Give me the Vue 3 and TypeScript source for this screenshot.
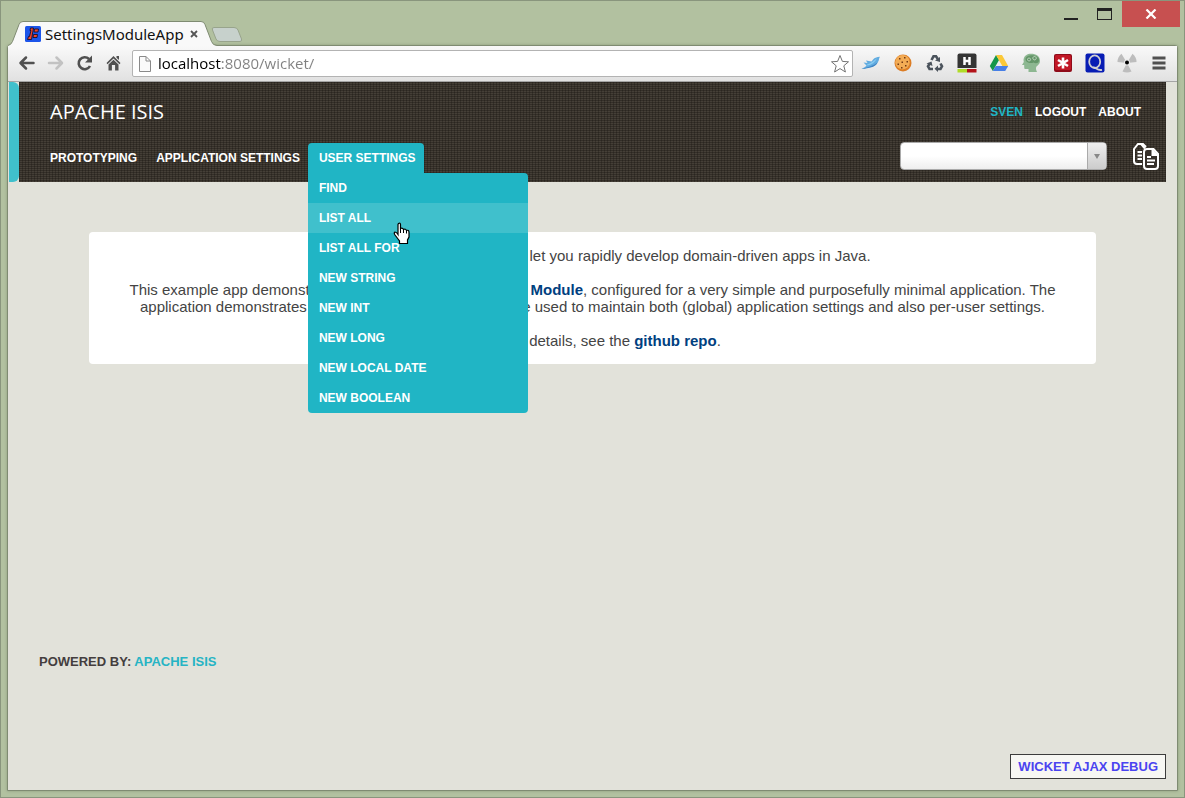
<script setup lang="ts">
import { ref } from 'vue'

interface MenuItem { label: string; active?: boolean }

const address = ref('localhost:8080/wicket/')
const search = ref('')

const userSettings: MenuItem[] = [
  { label: 'Find' },
  { label: 'List All', active: true },
  { label: 'List All For' },
  { label: 'New String' },
  { label: 'New Int' },
  { label: 'New Long' },
  { label: 'New Local Date' },
  { label: 'New Boolean' },
]
</script>

<template>
  <div class="window">
    <div class="titlebar">
      <div class="tab">
        <svg class="tab-shape" width="210" height="25" viewBox="0 0 210 25" aria-hidden="true">
          <path d="M0 25 V24.5 Q3 24 4.500 20.500 L11 3.500 Q12 .5 15 .5 H193 Q196 .5 197 3.500 L203.500 20.500 Q205 24.500 209 24.500 V25 Z" fill="#f9f9f9" />
          <path d="M0 24.500 Q3 24 4.500 20.500 L11 3.500 Q12 .5 15 .5 H193 Q196 .5 197 3.500 L203.500 20.500 Q205 24.500 209 24.500" fill="none" stroke="#7f8b72" />
        </svg>
        <div class="tab-content">
          <svg width="16" height="16" viewBox="0 0 16 16" aria-hidden="true">
            <rect width="16" height="16" rx="1.500" fill="#1d55ea" />
            <path d="M5.500 2 H8.500 L6.500 13.500 H2.500 L3.500 10.500 H4.500 L6 4.500 H5 Z M9.500 3 H13.500 L13 6 H9 Z M8.500 8.500 H12.500 L12 11.500 H8 Z" fill="#f4442a" stroke="#14102c" stroke-width=".9" />
          </svg>
          <span class="tab-title">SettingsModuleApp</span>
          <button class="tab-close" aria-label="Close tab">
            <svg width="8" height="8" viewBox="0 0 8 8"><path d="M1 1 L7 7 M7 1 L1 7" stroke="#555" stroke-width="1.800" /></svg>
          </button>
        </div>
      </div>
      <button class="new-tab" aria-label="New tab">
        <svg width="34" height="18" viewBox="0 0 34 18">
          <path d="M4 1.500 H24 Q27 1.500 28 4 L31.500 13 Q32 15.500 30 15.500 H10 Q7 15.500 6 13 L2.500 4 Q1.500 1.500 4 1.500 Z" fill="#c7d1cc" stroke="#98a48c" />
        </svg>
      </button>
      <div class="controls">
        <button class="control" aria-label="Minimize">
          <svg width="16" height="14" viewBox="0 0 16 14"><rect x="1" y="11" width="14" height="2" fill="#222" /></svg>
        </button>
        <button class="control" aria-label="Maximize">
          <svg width="16" height="14" viewBox="0 0 16 14"><path d="M0 1 H15 V13 H0 Z M1 4 V12 H14 V4 Z" fill="#222" fill-rule="evenodd" /></svg>
        </button>
        <button class="control close" aria-label="Close">
          <svg width="12" height="10" viewBox="0 0 12 10"><path d="M1.500 .5 L10.500 9.500 M10.500 .5 L1.500 9.500" stroke="#fff" stroke-width="2.200" /></svg>
        </button>
      </div>
    </div>

    <div class="client">
      <div class="toolbar">
        <div class="nav-buttons">
          <button aria-label="Back">
            <svg width="18" height="18" viewBox="0 0 18 18"><path d="M15.500 9 H3 M8 3.500 L2.500 9 L8 14.500" fill="none" stroke="#505050" stroke-width="2.500" stroke-linecap="round" stroke-linejoin="round" /></svg>
          </button>
          <button aria-label="Forward">
            <svg width="18" height="18" viewBox="0 0 18 18"><path d="M2 9 H14.500 M9.500 3.500 L15 9 L9.500 14.500" fill="none" stroke="#c2c2c2" stroke-width="2.500" stroke-linecap="round" stroke-linejoin="round" /></svg>
          </button>
          <button aria-label="Reload">
            <svg width="18" height="18" viewBox="0 0 18 18"><path d="M14 12 A6 6 0 1 1 13 5" fill="none" stroke="#505050" stroke-width="2.600" /><path d="M16 1.500 V8.500 H9 Z" fill="#505050" /></svg>
          </button>
          <button aria-label="Home">
            <svg width="18" height="18" viewBox="0 0 18 18"><path d="M8.500 2 L15.500 9 L14.500 10.200 L8.500 4.500 L2.500 10.200 L1.500 9 Z M11.500 2 H14 V6 L11.500 3.800 Z M8.500 5.800 L13.500 10.500 V16.500 H10.100 V11 H6.900 V16.500 H3.500 V10.500 Z" fill="#505050" /></svg>
          </button>
        </div>
        <div class="address">
          <svg width="14" height="18" viewBox="0 0 14 18" aria-hidden="true"><path d="M1.500 1.500 H8 L12.500 6 V16.500 H1.500 Z M8 1.500 V6 H12.500" fill="#fafafa" stroke="#8a8a8a" /></svg>
          <input v-model="address" type="text" aria-label="Address" spellcheck="false" />
          <button class="star" aria-label="Bookmark this page">
            <svg width="20" height="20" viewBox="0 0 20 20"><path d="M10 1.500 L12.400 7.400 L18.500 7.800 L13.800 11.800 L15.400 18 L10 14.600 L4.600 18 L6.200 11.800 L1.500 7.800 L7.600 7.400 Z" fill="#fff" stroke="#737373" stroke-linejoin="round" /></svg>
          </button>
        </div>
        <div class="extensions">
          <button aria-label="Twitter">
            <svg width="20" height="20" viewBox="0 0 20 20"><path d="M.5 15.800 C3 14.800 4.500 14 5.500 12.500 L2.500 9.500 L6.500 10 L5 7.500 L10.500 8.500 C12.500 6.500 12.500 4.500 19 3.800 C17.500 5.500 18.500 7 17 9 C15.500 12 12.500 14 9 14.500 C6 15 4 16 .5 15.800 Z" fill="#62ace0" /><path d="M6 11.500 C10 10.500 12.500 8 16 5.200 C14 9.500 10.500 11.800 6.500 12.500 Z" fill="#8accf2" /><path d="M.5 15.800 C6 14.500 12 13 16.800 9.200 C15.500 12 12.500 14 9 14.500 C6 15 4 16 .5 15.800 Z" fill="#4386c4" /></svg>
          </button>
          <button aria-label="Cookies">
            <svg width="18" height="18" viewBox="0 0 18 18"><circle cx="9" cy="9" r="8.500" fill="#dc7d25" /><circle cx="8.500" cy="8.200" r="7.200" fill="#f3ac55" /><path d="M5 4 h1.500 v1.500 H5 Z M10 3 h1.500 v1.500 H10 Z M7.500 7.500 h1.500 V9 H7.500 Z M12.500 7 H14 v1.500 h-1.500 Z M3.500 9.500 H5 V11 H3.500 Z M11 11 h1.500 v1.500 H11 Z M7 13 h1.500 v1.500 H7 Z" fill="#733a14" /></svg>
          </button>
          <button aria-label="Recycle">
            <svg width="18" height="18" viewBox="0 0 18 18" fill="none" stroke="#4b535c" stroke-width="2.600"><path d="M5.500 6 L7.500 2.300 H10 L11.800 5" /><path d="M14.500 9.500 L16 12.300 L14.500 15 H11" /><path d="M7 15 H3.500 L2 12.300 L3.800 9.500" /><path d="M9 6.500 L14 3 V8 Z M12 11.500 V18 L8.500 14.800 Z M.5 9.500 L5.500 7.500 L6.500 12 Z" fill="#4b535c" stroke="none" /></svg>
          </button>
          <button aria-label="Highlighter">
            <svg width="20" height="20" viewBox="0 0 20 20"><path d="M2.500 .5 H17.500 Q19.500 .5 19.500 2.500 V15 H.5 V2.500 Q.5 .5 2.500 .5 Z" fill="#343434" /><path d="M7.500 4 V12 M12.500 4 V12 M7.500 8 H12.500" stroke="#fff" stroke-width="2.500" /><rect x=".5" y="16" width="9.500" height="3.500" fill="#b0dc28" /><rect x="10" y="16" width="9.500" height="3.500" fill="#b31319" /></svg>
          </button>
          <button aria-label="Drive">
            <svg width="20" height="18" viewBox="0 0 20 18"><path d="M7 1 L.8 12 L3.800 17 L10 6 Z" fill="#14974b" /><path d="M7 1 H13 L19.200 12 H13.300 Z" fill="#fbc838" /><path d="M6.800 12 H19.200 L16.200 17 H3.800 Z" fill="#477fe6" /></svg>
          </button>
          <button aria-label="Brain">
            <svg width="20" height="20" viewBox="0 0 20 20"><path d="M2.500 7 C3 2.500 6.500 .8 10 .8 C15 .8 19 3 19 8 C19 11 17 12 15.500 13.500 C14.500 15 15 17 16 19 H7.500 V16 H4 Q3 16 3.200 13.500 V12 H1 L2.800 9 Z" fill="#8db791" /><path d="M4.500 6 C4.500 1 17.500 .5 18 6.500 C18.500 10.500 14.500 11 12.500 9.500 C9.500 11 4.500 9.500 4.500 6 Z" fill="#649669" /><path d="M8 5 a1.500 1.500 0 1 0 .1 0 M13.500 3.500 a1.700 1.700 0 1 0 .1 0" fill="none" stroke="#c3d8c3" /></svg>
          </button>
          <button aria-label="Password manager">
            <svg width="18" height="18" viewBox="0 0 18 18"><rect width="18" height="18" rx="2" fill="#8f0b19" /><rect x="1" y="1" width="16" height="15" rx="1.500" fill="#c11726" /><path d="M9 3.500 V14.500 M4 6 L14 12 M14 6 L4 12" stroke="#fff" stroke-width="2.600" /></svg>
          </button>
          <button aria-label="Quick search">
            <svg width="20" height="20" viewBox="0 0 20 20"><rect x=".5" y=".5" width="19" height="19" rx="2" fill="#071cb4" /><ellipse cx="9.700" cy="8.700" rx="5.500" ry="6.300" fill="none" stroke="#cfcfd2" stroke-width="1.800" /><path d="M8 14.500 C11 14 12 18 17 16.800" fill="none" stroke="#cfcfd2" stroke-width="1.800" /></svg>
          </button>
          <button aria-label="Radiation">
            <svg width="20" height="20" viewBox="0 0 20 20"><path d="M10 10 L.5 9 Q.5 4 4.500 .8 Z M10 10 L19.500 9 Q19.500 4 15.500 .8 Z M10 10 L5.500 18.500 Q10 20.500 14.500 18.500 Z" fill="#bdbdbd" /><circle cx="10" cy="9.500" r="3" fill="#e9e9e9" /><circle cx="10" cy="9.500" r="2" fill="#000" /></svg>
          </button>
          <button aria-label="Menu">
            <svg width="14" height="14" viewBox="0 0 14 14"><path d="M.5 2 H13.500 M.5 7 H13.500 M.5 12 H13.500" stroke="#505050" stroke-width="2.800" /></svg>
          </button>
        </div>
      </div>

      <div class="page">
        <header class="header">
          <div class="accent"></div>
          <div class="banner">
            <div class="banner-row">
              <a class="brand" href="#">APACHE ISIS</a>
              <nav class="account" aria-label="Account">
                <a class="user" href="#">Sven</a>
                <a href="#">Logout</a>
                <a href="#">About</a>
              </nav>
            </div>
            <div class="banner-row menu-row">
              <nav class="menu" aria-label="Services">
                <a class="menu-title" href="#">Prototyping</a>
                <a class="menu-title" href="#">Application Settings</a>
                <div class="menu-group">
                  <a class="menu-title open" href="#">User Settings</a>
                  <ul class="dropdown">
                    <li v-for="item in userSettings" :key="item.label" :class="{ active: item.active }">
                      <a href="#">{{ item.label }}</a>
                      <svg v-if="item.active" class="pointer" width="18" height="23" viewBox="0 0 18 23" aria-hidden="true">
                        <path d="M5.500 1.500 Q7.500 .5 7.500 2.500 V6.500 Q9.500 5.500 10.500 7.500 Q12.500 6.500 13.500 8.500 Q16 7.500 16 10.500 V15 L14.500 18 V21.500 H6.500 V19 L2 13 Q.5 10.500 2 10 Q3.500 10 5 12.500 V2.500 Z" fill="#fff" stroke="#000" stroke-width="1.200" />
                        <path d="M7.500 6.500 V11 M10.500 7.500 V11 M13.500 8.500 V11.500" stroke="#000" />
                      </svg>
                    </li>
                  </ul>
                </div>
              </nav>
              <div class="tools">
                <div class="picker">
                  <select v-model="search" aria-label="Bookmarked pages"><option value=""></option></select>
                  <span class="picker-arrow"><svg width="6" height="5" viewBox="0 0 6 5"><path d="M0 0 H6 L3 5 Z" fill="#888" /></svg></span>
                </div>
                <button class="copy" aria-label="Copy link">
                  <svg width="28" height="28" viewBox="0 0 28 28" fill="none" stroke="#fff" stroke-width="2"><path d="M10 22 H5 Q2 22 2 19 V7 L6 2 H11 L14 5" /><path d="M9.500 2.500 L13 6.500" /><path d="M5.500 10 H10 M5.500 13.500 H10 M5.500 17 H10" /><path d="M15 7 H21.500 L26 12 V24 Q26 27 23 27 H15 Q12 27 12 24 V10 Q12 7 15 7 Z" fill="#37312b" /><path d="M20.500 7 V13 H26" fill="#fff" /><path d="M15 15 H19 M15 18.500 H23 M15 22 H22" /></svg>
                </button>
              </div>
            </div>
          </div>
        </header>

        <main class="welcome">
          <p>Apache Isis&trade; is a framework to let you rapidly develop domain-driven apps in Java.</p>
          <p>This example app demonstrates capabilities of the <a href="#">Settings Module</a>, configured for a very simple and purposefully minimal application. The application demonstrates how this module's entities can be used to maintain both (global) application settings and also per-user settings.</p>
          <p>For more details, see the <a href="#">github repo</a>.</p>
        </main>

        <footer class="footer">
          <span>POWERED BY: <a href="#">APACHE ISIS</a></span>
          <button class="debug">WICKET AJAX DEBUG</button>
        </footer>
      </div>
    </div>
  </div>
</template>

<style>
body { margin: 0; }
</style>

<style scoped>
* { box-sizing: border-box; }
button { border: 0; padding: 0; margin: 0; background: none; font: inherit; }
a { text-decoration: none; color: inherit; }
svg { display: block; flex: none; }

.window {
  min-height: 100vh;
  display: flex;
  flex-direction: column;
  padding: 0 6px 6px;
  border: 1px solid #89957d;
  background: #b2c1a0;
  font-family: "Liberation Sans", Arial, sans-serif;
}
.titlebar { display: flex; height: 44px; }
.tab { display: grid; align-self: flex-end; margin: 0 0 -1px 1px; z-index: 1; }
.tab-shape, .tab-content { grid-area: 1 / 1; }
.tab-content { display: flex; align-items: center; padding: 0 16px 0 17px; z-index: 1; }
.tab-title {
  flex: 1;
  min-width: 0;
  margin-left: 4px;
  font: 15px/20px "Noto Sans", "Open Sans", sans-serif;
  color: #111;
  white-space: nowrap;
}
.tab-close { width: 16px; height: 16px; display: grid; place-items: center; }
.new-tab { align-self: flex-end; margin-bottom: 1px; margin-left: -8px; }
.controls { display: flex; margin: 0 -2px 0 auto; }
.control { width: 34px; height: 26px; display: grid; place-items: center; }
.control.close { width: 58px; background: #c75050; }

.client {
  flex: 1;
  display: flex;
  flex-direction: column;
  border: 1px solid #7f8b72;
  border-radius: 3px 3px 0 0;
  box-shadow: 0 0 3px #8a987b;
  background: #e2e2da;
}
.toolbar {
  display: flex;
  align-items: center;
  height: 36px;
  padding: 0 2px 0 4px;
  background: linear-gradient(#f9f9f9, #e1e1e1);
  border-bottom: 1px solid #a5a5a5;
}
.nav-buttons { display: flex; margin-right: 4px; }
.nav-buttons button, .extensions button { height: 28px; padding-bottom: 2px; display: grid; place-items: center; }
.nav-buttons button { width: 29px; }
.extensions button { width: 32px; }
.address {
  flex: 1;
  display: flex;
  align-items: center;
  height: 27px;
  padding: 0 2px 0 5px;
  border: 1px solid #b3b3b3;
  border-radius: 2px;
  background: #fff;
}
.address input {
  flex: 1;
  min-width: 0;
  margin-left: 6px;
  padding: 0 0 2px;
  border: 0;
  outline: 0;
  font: 15px/22px "Open Sans", "Noto Sans", sans-serif;
  color: transparent;
  background: linear-gradient(90deg, #000 64px, #808080 64px);
  -webkit-background-clip: text;
  background-clip: text;
}
.extensions { display: flex; margin-left: 2px; }

.page { flex: 1; display: flex; flex-direction: column; padding: 0 11px 11px 1px; }
.header { display: flex; height: 100px; }
.accent { width: 10px; background: #40c0cc; border-radius: 0 6px 6px 0; }
.banner {
  flex: 1;
  padding: 15px 6px 0 20px;
  background-color: #453f37;
  background-image:
    repeating-linear-gradient(90deg, rgba(20, 16, 12, 0.3) 0 1px, transparent 1px 3px),
    repeating-linear-gradient(rgba(20, 16, 12, 0.35) 0 1px, transparent 1px 2px);
  color: #fff;
}
.banner-row { display: flex; justify-content: space-between; align-items: center; height: 30px; }
.brand { margin-left: 11px; font: 20px/30px "Open Sans", "Noto Sans", sans-serif; }
.account { display: flex; gap: 12px; padding-right: 19px; font: bold 12px/30px "Liberation Sans", Arial, sans-serif; text-transform: uppercase; }
.user { color: #20b6c6; }
.menu-row { margin-top: 15px; align-items: flex-start; }
.menu { display: flex; padding-top: 1px; font: bold 12px/30px "Liberation Sans", Arial, sans-serif; text-transform: uppercase; white-space: nowrap; }
.menu-title { display: block; padding: 0 8px 0 11px; }
.menu-title.open { background: #20b5c5; border-radius: 4px 4px 0 0; }
.menu-group { position: relative; }
.dropdown {
  position: absolute;
  top: 30px;
  left: 0;
  z-index: 2;
  width: 220px;
  margin: 0;
  padding: 0;
  list-style: none;
  background: #20b5c5;
  border-radius: 0 4px 4px 4px;
}
.dropdown li { position: relative; }
.dropdown a { display: block; padding: 0 11px; }
.dropdown .active { background: #40c0cc; z-index: 1; }
.pointer { position: absolute; left: 85px; top: 19px; }
.tools { display: flex; align-items: center; gap: 25px; }
.picker { display: grid; grid-template-columns: 1fr 20px; width: 207px; height: 28px; }
.picker select {
  grid-area: 1 / 1 / 2 / 3;
  appearance: none;
  border: 1px solid #aaa;
  border-radius: 4px;
  background: linear-gradient(#fff 50%, #eee);
}
.picker-arrow {
  grid-area: 1 / 2;
  z-index: 1;
  display: grid;
  place-items: center;
  margin: 1px 1px 1px 0;
  border-left: 1px solid #aaa;
  border-radius: 0 3px 3px 0;
  background: linear-gradient(#eee, #ccc);
  pointer-events: none;
}

.welcome {
  margin: 50px 70px 0 80px;
  padding: 15px 30px;
  border-radius: 4px;
  background: #fff;
  color: #444;
  font-size: 15px;
  line-height: 17px;
  text-align: center;
}
.welcome p { margin: 0 0 17px; }
.welcome p:last-child { margin: 0; }
.welcome a { font-weight: bold; color: #00407f; }

.footer {
  display: flex;
  flex-direction: column;
  gap: 83px;
  margin-top: auto;
  padding-left: 30px;
  font-size: 13px;
  line-height: 18px;
  font-weight: bold;
  color: #443e3e;
}
.footer a { color: #26b4c4; }
.debug {
  align-self: flex-end;
  height: 25px;
  padding: 0 7px;
  border: 1px solid #3c3c3c;
  background: #f7f7f3;
  color: #4a44f0;
}
</style>
